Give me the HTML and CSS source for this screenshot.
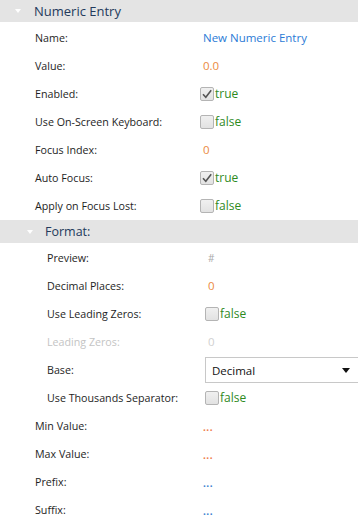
FILE: index.html
```html
<!DOCTYPE html>
<html>
<head>
<meta charset="utf-8">
<link rel="stylesheet" href="styles.css">
</head>
<body>
<div class="panel">
  <div class="group-head">
    <span class="tri"></span><span class="group-title">Numeric Entry</span>
  </div>
  <div class="row"><span class="label">Name:</span><span class="val str">New Numeric Entry</span></div>
  <div class="row"><span class="label">Value:</span><span class="val num">0.0</span></div>
  <div class="row"><span class="label">Enabled:</span><span class="bool"><span class="cb checked"><svg viewBox="0 0 14 14" width="14" height="14"><path d="M3 7.2 L5.8 10.3 L11.2 3.2" fill="none" stroke="#555" stroke-width="1.6"/></svg></span><span class="b">true</span></span></div>
  <div class="row"><span class="label">Use On-Screen Keyboard:</span><span class="bool"><span class="cb"></span><span class="b">false</span></span></div>
  <div class="row"><span class="label">Focus Index:</span><span class="val num">0</span></div>
  <div class="row"><span class="label">Auto Focus:</span><span class="bool"><span class="cb checked"><svg viewBox="0 0 14 14" width="14" height="14"><path d="M3 7.2 L5.8 10.3 L11.2 3.2" fill="none" stroke="#555" stroke-width="1.6"/></svg></span><span class="b">true</span></span></div>
  <div class="row"><span class="label">Apply on Focus Lost:</span><span class="bool"><span class="cb"></span><span class="b">false</span></span></div>

  <div class="sub-head">
    <span class="tri"></span><span class="sub-title">Format:</span>
  </div>
  <div class="row sub"><span class="label">Preview:</span><span class="val hash">#</span></div>
  <div class="row sub"><span class="label">Decimal Places:</span><span class="val num">0</span></div>
  <div class="row sub"><span class="label">Use Leading Zeros:</span><span class="bool"><span class="cb"></span><span class="b">false</span></span></div>
  <div class="row sub disabled"><span class="label">Leading Zeros:</span><span class="val dis">0</span></div>
  <div class="row sub"><span class="label">Base:</span>
    <span class="select"><span>Decimal</span><svg class="arrow" viewBox="0 0 8 5" width="8" height="5"><path d="M0 0 H8 L4 5 Z" fill="#111"/></svg></span>
  </div>
  <div class="row sub"><span class="label">Use Thousands Separator:</span><span class="bool"><span class="cb"></span><span class="b">false</span></span></div>

  <div class="row"><span class="label">Min Value:</span><span class="val dots orange">...</span></div>
  <div class="row"><span class="label">Max Value:</span><span class="val dots orange">...</span></div>
  <div class="row"><span class="label">Prefix:</span><span class="val dots blue">...</span></div>
  <div class="row"><span class="label">Suffix:</span><span class="val dots blue">...</span></div>
</div>
</body>
</html>
```
FILE: styles.css
```css
* { box-sizing: border-box; }
html, body { margin: 0; padding: 0; background: #fff; }
body {
  font-family: "Open Sans", "Noto Sans", sans-serif;
  font-size: 10.7px;
  color: #1e1e1e;
  width: 358px;
  overflow: hidden;
}
.panel { display: flex; flex-direction: column; }

.group-head {
  height: 22px;
  margin-bottom: 2px;
  background: #e4e4e4;
  display: flex;
  align-items: center;
  padding-left: 15px;
}
.tri {
  width: 0; height: 0;
  border-left: 3.5px solid transparent;
  border-right: 3.5px solid transparent;
  border-top: 4px solid #fff;
  margin-right: 13px;
}
.group-title { font-size: 13px; color: #233a5c; }

.sub-head {
  height: 24px;
  background: #e4e4e4;
  display: flex;
  align-items: center;
  padding-left: 27px;
  border-bottom: 1px solid #fff;
}
.sub-head .tri { margin-right: 12px; }
.sub-title { font-size: 12.5px; color: #233a5c; }

.row {
  height: 28px;
  display: grid;
  grid-template-columns: 165px 1fr;
  align-items: center;
  padding-left: 35px;
  padding-bottom: 1px;
}
.row.sub { padding-left: 47px; grid-template-columns: 158px 1fr; }
.row.disabled .label { color: #c4c4c4; }

.val { padding-left: 3px; font-size: 11.5px; }
.str { color: #2b7bd6; }
.num { color: #eb8a3e; }
.hash { color: #a9a9a9; font-size: 10px; }
.dis { color: #d0d0d0; }
.dots { font-weight: bold; letter-spacing: 0.5px; font-size: 10px; position: relative; top: 1px; }
.orange { color: #ef7a48; }
.blue { color: #3a7fd0; }

.bool { display: flex; align-items: center; gap: 1px; }
.cb {
  width: 14px; height: 14px;
  border: 1px solid #b4b4b4;
  border-radius: 2px;
  background: linear-gradient(#f0f0f0, #e2e2e2);
  display: flex;
}
.cb svg { margin: -1px; }
.b { color: #2f8a1e; font-size: 12px; }

.select {
  height: 26px;
  border: 1px solid #c8c8c8;
  display: flex;
  align-items: center;
  justify-content: space-between;
  padding: 0 8px 0 6px;
  font-size: 11.5px;
  color: #111;
  margin-right: -1px;
  margin-top: 1px;
}
```
